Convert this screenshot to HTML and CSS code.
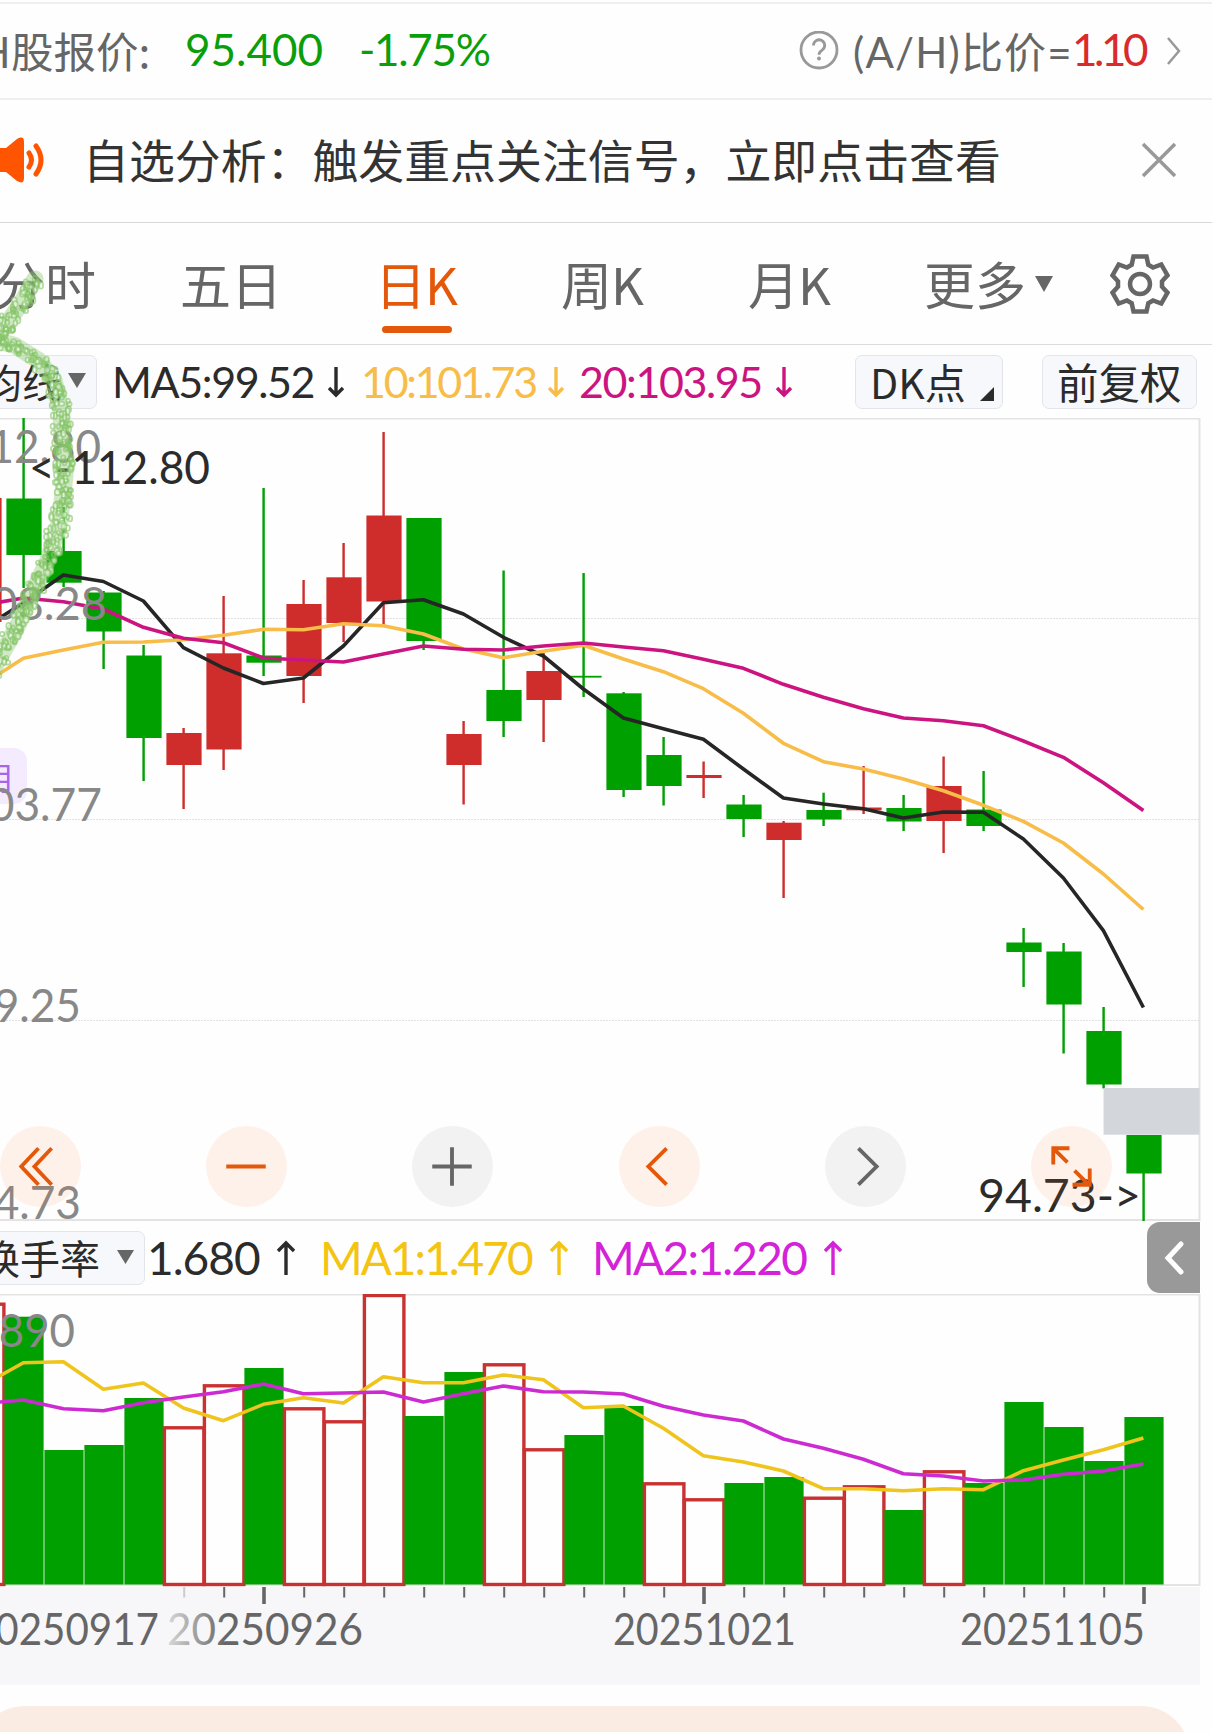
FILE: index.html
```html
<!DOCTYPE html>
<html lang="zh-CN">
<head>
  <meta charset="UTF-8">
  <title>日K</title>
  <link rel="stylesheet" href="styles.css">
</head>
<body>
  <div class="quote-bar">
    <span class="quote-label">H股报价:</span>
    <span class="quote-price">95.400</span>
    <span class="quote-change">-1.75%</span>
    <svg class="help" width="40" height="40" viewBox="0 0 40 40">
      <circle cx="20" cy="19" r="18"/>
      <path d="M14.5 14.5a5.6 5.6 0 1 1 8.6 4.6c-2.2 1.4-3.1 2.4-3.1 4.6"/>
      <circle class="dot" cx="20" cy="27.6" r="2"/>
    </svg>
    <span class="ratio-label">(A/H)比价=</span>
    <span class="ratio-value">1.10</span>
    <svg class="more" width="16" height="30" viewBox="0 0 16 30"><path d="M2 2l11 13L2 28"/></svg>
  </div>

  <div class="notice">
    <svg class="horn" width="44" height="46" viewBox="0 0 44 46">
      <path class="fill" d="M0 11h6L17 2q7-4 7 3v36q0 7-7 3L6 35H0z"/>
      <path d="M29 16q5 7 0 14M36 9q10 14 0 28"/>
    </svg>
    <span class="notice-text">自选分析：触发重点关注信号，立即点击查看</span>
    <svg class="close" width="36" height="36" viewBox="0 0 36 36"><path d="M2 2l32 32M34 2L2 34"/></svg>
  </div>

  <div class="tabs">
    <span class="tab t1">分时</span>
    <span class="tab t2">五日</span>
    <span class="tab t3 active">日K</span>
    <span class="tab t4">周K</span>
    <span class="tab t5">月K</span>
    <span class="tab t6">更多</span>
    <svg class="caret" width="18" height="16" viewBox="0 0 18 16"><path d="M0 0h18L9 16z"/></svg>
    <svg class="gear" width="60" height="60" viewBox="0 0 60 60">
      <path d="M23.5 2.5h13l1.8 8.2 4.7 2.8 8.3-3 6.2 10.8-5.5 6v5.4l5.5 6-6.2 10.8-8.3-3-4.7 2.8-1.8 8.2h-13l-1.8-8.2-4.7-2.8-8.3 3-6.2-10.8 5.5-6v-5.4l-5.5-6 6.2-10.8 8.3 3 4.7-2.8z"/>
      <circle cx="30" cy="30" r="10"/>
    </svg>
  </div>

  <div class="ma-bar">
    <div class="btn btn-ma">均线<svg width="18" height="15" viewBox="0 0 18 15"><path d="M0 0h18L9 15z"/></svg></div>
    <span class="ma ma5">MA5:99.52</span>
    <svg class="arrow ma5" width="18" height="32" viewBox="0 0 18 32"><path d="M9 1v28M2 22l7 7 7-7"/></svg>
    <span class="ma ma10">10:101.73</span>
    <svg class="arrow ma10" width="18" height="32" viewBox="0 0 18 32"><path d="M9 1v28M2 22l7 7 7-7"/></svg>
    <span class="ma ma20">20:103.95</span>
    <svg class="arrow ma20" width="18" height="32" viewBox="0 0 18 32"><path d="M9 1v28M2 22l7 7 7-7"/></svg>
    <div class="btn btn-dk">DK点<svg width="14" height="14" viewBox="0 0 14 14"><path d="M14 0v14H0z"/></svg></div>
    <div class="btn btn-fq">前复权</div>
  </div>

  <div class="price">
    <svg id="price" width="1212" height="803" viewBox="0 418 1212 803"></svg>
    <div class="controls">
      <div class="ctl on"><svg viewBox="0 0 80 80"><path d="M38 22L21 40l17 18M51 22L34 40l17 18"/></svg></div>
      <div class="ctl on"><svg viewBox="0 0 80 80"><path d="M20 40h39"/></svg></div>
      <div class="ctl"><svg viewBox="0 0 80 80"><path d="M20 40h39M39.5 21v38"/></svg></div>
      <div class="ctl on"><svg viewBox="0 0 80 80"><path d="M47 22L29 40l18 18"/></svg></div>
      <div class="ctl"><svg viewBox="0 0 80 80"><path d="M33 22l18 18-18 18"/></svg></div>
      <div class="ctl on"><svg viewBox="0 0 80 80"><path d="M22 38V22h16M22 22l14 14M43 44l14 14M41 58h17V42"/></svg></div>
    </div>
  </div>

  <div class="turnover">
    <div class="btn btn-hs">换手率<svg width="17" height="14" viewBox="0 0 17 14"><path d="M0 0h17L8.500 14z"/></svg></div>
    <span class="tv tv0">1.680</span>
    <svg class="arrow tv0" width="18" height="36" viewBox="0 0 18 36"><path d="M9 35V3M1 11l8-8 8 8"/></svg>
    <span class="tv tv1">MA1:1.470</span>
    <svg class="arrow tv1" width="18" height="36" viewBox="0 0 18 36"><path d="M9 35V3M1 11l8-8 8 8"/></svg>
    <span class="tv tv2">MA2:1.220</span>
    <svg class="arrow tv2" width="18" height="36" viewBox="0 0 18 36"><path d="M9 35V3M1 11l8-8 8 8"/></svg>
    <div class="drawer"><svg width="20" height="34" viewBox="0 0 20 34"><path d="M17 3L4 17l13 14"/></svg></div>
  </div>

  <svg class="volume" id="volume" width="1212" height="293" viewBox="0 1294 1212 293"></svg>
  <div class="axis"><svg id="axis" width="1200" height="98" viewBox="0 1587 1200 98"></svg></div>
  <div class="bottom-card"></div>

  <svg class="brush" id="brush" width="110" height="430" viewBox="0 260 110 430"></svg>

  <script src="chart.js"></script>
</body>
</html>
```

FILE: styles.css
```css
* {
  box-sizing: border-box;
}

html {
  overflow: hidden;
}

body {
  position: relative;
  margin: 0;
  width: 1212px;
  height: 1732px;
  padding-top: 2px;
  overflow: hidden;
  background: #fefefe;
  color: #2b2b2b;
  font-family: Lato, "Noto Sans CJK SC", sans-serif;
  white-space: nowrap;
}

svg {
  display: block;
  flex: none;
  fill: none;
}

span {
  flex: none;
}

/* H share quote */
.quote-bar {
  display: flex;
  align-items: center;
  height: 98px;
  border-top: 2px solid #efefef;
  border-bottom: 2px solid #efefef;
  font-size: 44px;
  color: #666;
}

.quote-bar span {
  padding-bottom: 4px;
}

.quote-label {
  width: 205px;
  margin-left: -20px;
  font-size: 42.500px;
  font-family: "Noto Sans CJK SC", sans-serif;
}

.quote-price {
  width: 174px;
  color: #0a9f0a;
}

.quote-change {
  width: 440px;
  letter-spacing: -1.300px;
  color: #0a9f0a;
}

.help {
  stroke: #999;
  stroke-width: 2.800;
}

.help .dot {
  fill: #999;
  stroke: none;
}

.ratio-label {
  width: 219px;
  margin-left: 14px;
  font-size: 42px;
  letter-spacing: 1.200px;
}

.ratio-value {
  width: 94px;
  letter-spacing: -3.500px;
  color: #d92b2b;
}

.more {
  stroke: #999;
  stroke-width: 2.500;
}

/* notice */
.notice {
  display: flex;
  align-items: center;
  height: 123px;
  padding-bottom: 2px;
  border-bottom: 1px solid #d8d8d8;
}

.horn {
  stroke: #ff5500;
  stroke-width: 5;
  stroke-linecap: round;
}

.horn .fill {
  fill: #ff5500;
  stroke: none;
}

.notice-text {
  width: 1058px;
  margin-left: 39px;
  padding-bottom: 4px;
  font-family: "Noto Sans CJK SC", sans-serif;
  font-size: 45.900px;
  color: #333;
}

.close {
  stroke: #999;
  stroke-width: 3.500;
}

/* tabs */
.tabs {
  display: flex;
  align-items: center;
  height: 122px;
  border-bottom: 1px solid #dcdcdc;
  font-family: "Noto Sans CJK SC", sans-serif;
  font-size: 51px;
  color: #666;
}

.tab {
  position: relative;
  top: -1px;
}

.t1 {
  width: 186px;
  margin-left: -6px;
}

.t2 {
  width: 195px;
}

.t3 {
  width: 186px;
}

.t4 {
  width: 187px;
}

.t5 {
  width: 176px;
}

.t6 {
  width: 111px;
}

.t3,
.t4,
.t5 {
  letter-spacing: -1px;
}

.tab.active {
  color: #e4580b;
}

.tab.active::after {
  content: "";
  position: absolute;
  left: 7px;
  bottom: -13px;
  width: 70px;
  height: 7px;
  border-radius: 4px;
  background: #e4580b;
}

.caret,
.btn svg {
  fill: #666;
}

.gear {
  margin-left: 57px;
  stroke: #666;
  stroke-width: 4.500;
}

/* moving averages */
.ma-bar {
  display: flex;
  align-items: center;
  height: 73px;
}

.btn {
  display: flex;
  flex: none;
  align-items: center;
  height: 54px;
  padding-bottom: 2px;
  border: 1.500px solid #e3e5ea;
  border-radius: 7px;
  background: #f6f8fb;
  font-family: "Noto Sans CJK SC", sans-serif;
}

.btn-ma {
  width: 117px;
  margin-left: -20px;
  padding-left: 1px;
  gap: 6px;
  font-size: 40px;
}

.ma {
  font-size: 43px;
}

span.ma5 {
  width: 215px;
  margin-left: 15px;
  letter-spacing: -1.400px;
}

span.ma10 {
  width: 186px;
  margin-left: 16px;
  letter-spacing: -2.300px;
}

span.ma20 {
  width: 196px;
  margin-left: 14px;
  letter-spacing: -1.400px;
}

.arrow {
  stroke-width: 3.400;
}

.ma5,
.tv0 {
  color: #2b2b2b;
  stroke: #2b2b2b;
}

.ma10 {
  color: #f7bd48;
  stroke: #f7bd48;
}

.ma20 {
  color: #cc1480;
  stroke: #cc1480;
}

.btn-dk {
  width: 148px;
  margin-left: 62px;
  padding-left: 14px;
  gap: 14px;
  font-size: 41px;
}

.btn-dk svg {
  margin-top: 26px;
  fill: #2b2b2b;
}

.btn-fq {
  width: 155px;
  margin-left: 39px;
  padding-left: 14px;
  font-size: 41.500px;
}

/* charts */
.price {
  position: relative;
  height: 803px;
}

.controls {
  position: absolute;
  left: 0;
  top: 708px;
  display: flex;
  gap: 125.200px;
}

.ctl {
  width: 81px;
  height: 81px;
  border-radius: 50%;
  background: rgba(80, 80, 80, 0.07);
  stroke: #666;
  stroke-width: 3.800;
}

.ctl.on {
  background: rgba(255, 110, 30, 0.09);
  stroke: #e4580b;
}

.turnover {
  display: flex;
  align-items: center;
  height: 73px;
}

.btn-hs {
  width: 166px;
  margin-left: -21px;
  gap: 17px;
  font-size: 40px;
}

.tv {
  font-size: 46px;
}

span.tv0 {
  width: 130px;
  margin-left: 2px;
  letter-spacing: -1px;
}

span.tv1 {
  width: 230px;
  margin-left: 25px;
  letter-spacing: -2px;
}

span.tv2 {
  width: 232px;
  margin-left: 24px;
  letter-spacing: -1.700px;
}

.tv1 {
  color: #f3c411;
  stroke: #f3c411;
}

.tv2 {
  color: #d422d8;
  stroke: #d422d8;
}

.drawer {
  display: flex;
  align-items: center;
  width: 53px;
  height: 71px;
  margin-left: 305px;
  padding-left: 17px;
  border-radius: 13px 0 0 13px;
  background: #999;
  stroke: #fff;
  stroke-width: 5;
  stroke-linecap: round;
}

.axis {
  width: 1200px;
  height: 98px;
  background: #f7f7fa;
}

.bottom-card {
  width: 1214px;
  height: 120px;
  margin: 21px 0 0 -24px;
  border-radius: 49px;
  background: #fbece3;
}

.frame {
  stroke: #e3e3e3;
  stroke-width: 2;
}

.grid {
  stroke: #e2e2e2;
  stroke-dasharray: 2 1;
}

.line {
  stroke-width: 3.600;
  stroke-linejoin: round;
}

.label {
  fill: #888;
  font-size: 47px;
}

.mark {
  fill: #2b2b2b;
  font-size: 47px;
}

.date {
  fill: #666;
  font-size: 45px;
}

.date.faded {
  fill: url(#fade);
}

.tag {
  fill: #a865e8;
  font-family: "Noto Sans CJK SC", sans-serif;
  font-size: 32px;
}

.brush {
  position: absolute;
  left: 0;
  top: 260px;
}
```

FILE: chart.js
```js
const GREEN = '#00a000';
const RED = '#cf2d2c';
const STEP = 40;
const X0 = 23.4;

// [up, high, low, bodyTop, bodyBottom]
const candles = [
  [1, 498, 622, 498, 622],
  [0, 418, 588, 498.5, 555], [0, 507, 587, 551, 582.7], [0, 591, 669, 592.5, 631.5],
  [0, 645, 781, 655.5, 738], [1, 728, 809, 733, 765], [1, 596, 770, 653.3, 749.5],
  [0, 488, 676, 655.5, 662.7], [1, 580, 703, 604, 676], [1, 543, 642, 577.3, 623],
  [1, 432, 627, 515.5, 601.5], [0, 518, 650, 518, 641], [1, 721, 804.5, 734, 765],
  [0, 570.5, 737, 690, 721], [1, 653, 742, 671, 700], [0, 573, 697, 675.8, 677.6],
  [0, 692, 797, 693.3, 790], [0, 737, 805.5, 755, 786], [1, 761.5, 798, 775, 778],
  [0, 795, 837, 804.5, 819], [1, 821, 898, 822.7, 840], [0, 792.7, 826, 810, 819.5],
  [1, 766, 814, 807.5, 810.3], [0, 795, 831, 808, 821.5], [1, 756.5, 853, 786, 821],
  [0, 771, 831, 809.5, 826], [0, 928, 987, 942.5, 952], [0, 943, 1053.5, 951.5, 1004.5],
  [0, 1007, 1088.5, 1031, 1084.5], [0, 1135, 1221, 1135, 1173.5]
];

const ma5 = [628, 603, 575, 581.5, 601, 647.7, 668, 683.5, 678, 646, 602.7, 599.7, 614, 637.3, 656, 689, 718, 728.7, 739.3, 769, 798, 804, 808.7, 818, 812, 812.3, 839, 878, 930.7, 1007.5];
const ma10 = [684, 658.3, 650, 642.3, 642, 639.7, 635.3, 629.3, 629.7, 623.7, 625.7, 634, 649, 657.7, 651.3, 645.3, 659, 671.7, 688.7, 713.3, 743.3, 761.7, 769, 779, 790.7, 805.3, 821.3, 843, 874, 909.5];
const ma20 = [605, 598, 601.7, 609, 627.3, 638.3, 642.7, 658, 660, 662, 654, 646, 649.3, 650, 646, 643, 647, 650.7, 659.3, 668.3, 684.3, 697.3, 708.7, 718, 720.7, 725.7, 741, 757.3, 782.7, 810.5];

// bar tops and the bars drawn hollow
const volumes = [1302.7, 1316.7, 1450, 1445, 1398, 1426.3, 1384.3, 1368, 1407.3, 1420.3, 1294, 1416, 1372, 1363.3, 1448.3, 1435, 1406, 1482.3, 1498.3, 1483, 1477, 1496.7, 1485.3, 1510, 1470.3, 1483, 1402, 1427, 1461, 1417];
const hollow = [0, 5, 6, 8, 9, 10, 13, 14, 17, 18, 21, 22, 24];
const vma1 = [1385, 1362.7, 1361.7, 1389.3, 1383, 1408, 1420.7, 1404.3, 1397.7, 1403, 1376.7, 1382.7, 1382.7, 1375, 1379.7, 1407.7, 1406, 1428.3, 1455.7, 1462, 1471, 1488.7, 1488.7, 1490.7, 1488.7, 1489.7, 1470.7, 1460, 1449.7, 1438];
const vma2 = [1403.5, 1400, 1408.7, 1410.7, 1402.7, 1397, 1391.7, 1384, 1393.7, 1393, 1392, 1402, 1393.7, 1386, 1391.7, 1392, 1394, 1406.3, 1415, 1421, 1439, 1448.3, 1459.3, 1473.7, 1476, 1481, 1480, 1474.3, 1471, 1464];

function xAt(i) {
  return X0 + (i - 1) * STEP;
}

function rect(x, y, w, h, fill) {
  return `<rect x="${x}" y="${y}" width="${w}" height="${h}" fill="${fill}"/>`;
}

function line(values, color) {
  const pts = values.map((y, i) => xAt(i) + ',' + y).join(' ');
  return `<polyline class="line" points="${pts}" stroke="${color}"/>`;
}

// text stretched between x1 and x2
function text(cls, str, x1, x2, y) {
  return `<text class="${cls}" x="${x1}" y="${y}" textLength="${x2 - x1}" lengthAdjust="spacingAndGlyphs">${str}</text>`;
}

function drawPrice() {
  let s = '';
  [618.5, 819.5, 1020.5].forEach(y => {
    s += `<path class="grid" d="M0 ${y}H1199"/>`;
  });
  s += '<path class="frame" d="M0 418.5H1199.500V1220H0"/>';
  s += '<rect x="-20" y="748" width="47" height="56" rx="13" fill="#f4ebff"/>';
  s += '<text class="tag" x="-19" y="790">用</text>';
  candles.forEach(([up, hi, lo, top, bottom], i) => {
    const c = up ? RED : GREEN;
    s += rect(xAt(i) - 1, hi, 2.4, lo - hi, c);
    s += rect(xAt(i) - 17, top, 35.2, bottom - top, c);
  });
  s += rect(1103.5, 1088, 96, 46.7, '#d3d7dc');
  s += line(ma5, '#262626') + line(ma10, '#f7bd48') + line(ma20, '#cc1480');
  s += text('label', '112.80', -37, 101, 463);
  s += text('label', '108.28', -35, 107, 620);
  s += text('label', '103.77', -37, 102, 821);
  s += text('label', '99.25', -32, 81, 1022);
  s += text('label', '94.73', -32, 81, 1218.5);
  s += text('mark', '&lt;-112.80', 29, 210, 484);
  s += text('mark', '94.73-&gt;', 978, 1141, 1212);
  document.getElementById('price').innerHTML = s;
}

function drawVolume() {
  let s = '<path class="frame" d="M0 1294.5H1199.500V1585H0"/>';
  volumes.forEach((y, i) => {
    const x = xAt(i) - 19;
    if (hollow.includes(i)) {
      s += `<rect x="${x}" y="${y + 1.5}" width="39.500" height="${1583 - y}" fill="#fefefe" stroke="#c93232" stroke-width="3.400"/>`;
    } else {
      s += rect(x, y, 39.2, 1584.5 - y, GREEN);
    }
  });
  s += line(vma1, '#efc41c') + line(vma2, '#cd2bd2');
  s += text('label', '1.890', -37, 75, 1347);
  document.getElementById('volume').innerHTML = s;
}

function drawAxis() {
  let s = '<defs><linearGradient id="fade" gradientUnits="userSpaceOnUse" x1="165" x2="225" y1="0" y2="0"><stop offset="0" stop-color="#ddd"/><stop offset="1" stop-color="#666"/></linearGradient></defs>';
  for (let i = 5; i < 30; i++) {
    const x = xAt(i) + 0.8;
    const big = i === 7 || i === 18 || i === 29;
    if (big) {
      s += rect(x - 2, 1587, 3.6, 17, '#666');
    } else {
      s += rect(x - 1, 1587, 2, 10.5, i === 5 ? '#ccc' : '#666');
    }
  }
  s += text('date', '20250917', -28, 159, 1645);
  s += text('date faded', '20250926', 167, 363, 1645);
  s += text('date', '20251021', 613, 796, 1645);
  s += text('date', '20251105', 960, 1145, 1645);
  document.getElementById('axis').innerHTML = s;
}

// green brush stroke made of small loops
function drawBrush() {
  let seed = 7;
  const rnd = () => {
    seed = (seed * 16807) % 2147483647;
    return seed / 2147483647;
  };
  const strokes = [
    [[35, 279], [22, 302], [8, 322], [-8, 345]],
    [[-8, 340], [14, 345], [38, 360], [54, 380], [61, 410], [62, 440], [65, 475], [60, 520], [48, 560], [34, 590], [18, 625], [4, 650], [-10, 675]]
  ];
  let s = '';
  strokes.forEach(pts => {
    s += `<polyline points="${pts.join(' ')}" stroke="#8cc870" stroke-opacity="0.4" stroke-width="17" stroke-linecap="round" stroke-linejoin="round"/>`;
    for (let i = 1; i < pts.length; i++) {
      const [ax, ay] = pts[i - 1];
      const [bx, by] = pts[i];
      const n = Math.round(Math.hypot(bx - ax, by - ay) * 0.9);
      for (let k = 0; k < n; k++) {
        const t = k / n;
        const cx = ax + (bx - ax) * t + (rnd() - 0.5) * 19;
        const cy = ay + (by - ay) * t + (rnd() - 0.5) * 8;
        const white = rnd() < 0.4 ? 0.6 : 0;
        s += `<ellipse cx="${cx.toFixed(1)}" cy="${cy.toFixed(1)}" rx="${(1.6 + rnd() * 1.2).toFixed(1)}" ry="${(2 + rnd() * 1.5).toFixed(1)}" stroke="#83c565" stroke-opacity="0.6" stroke-width="1.800" fill="#fff" fill-opacity="${white}"/>`;
      }
    }
  });
  document.getElementById('brush').innerHTML = s;
}

drawPrice();
drawVolume();
drawAxis();
drawBrush();
```
